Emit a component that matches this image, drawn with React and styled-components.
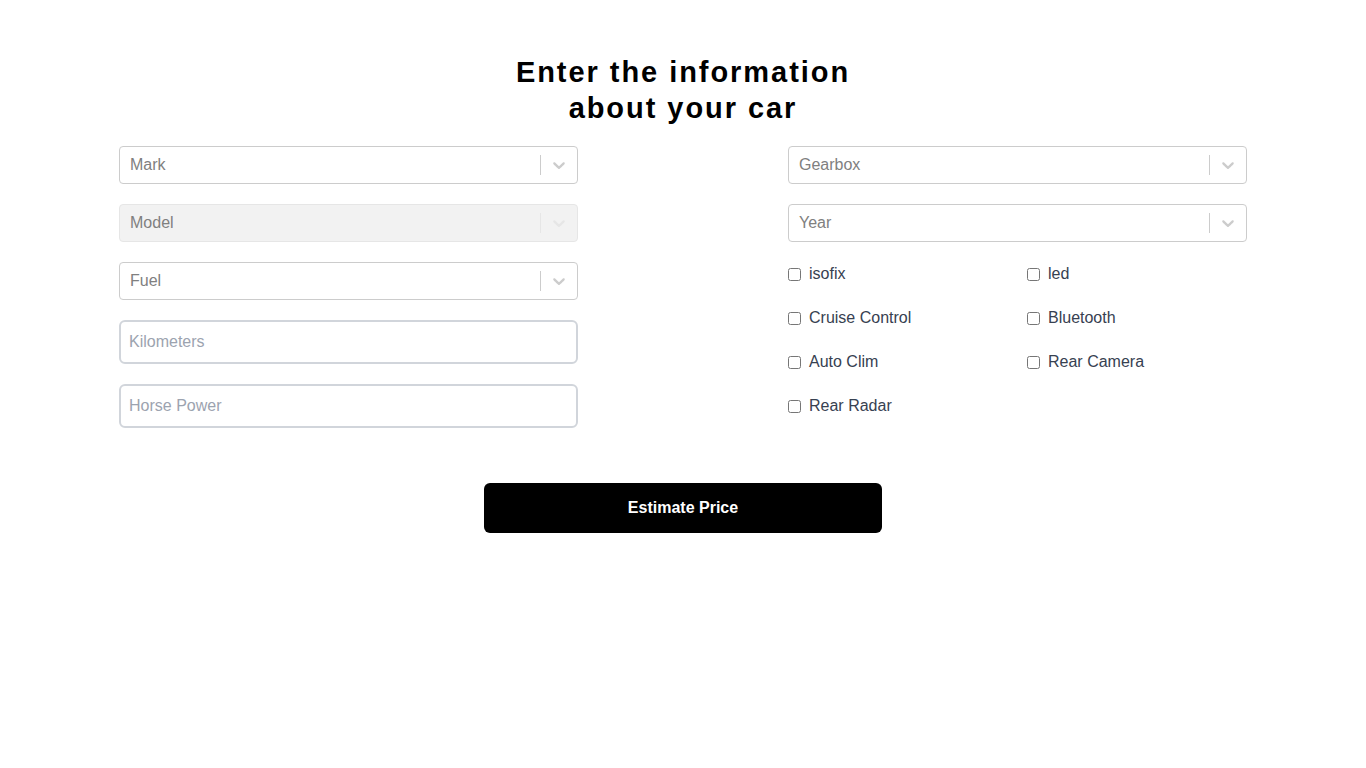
import React from "react";
import styled, { createGlobalStyle } from "styled-components";

const Global = createGlobalStyle`
  html, body { margin: 0; padding: 0; background: #fff; }
  body { font-family: "Liberation Sans", Arial, sans-serif; }
  * { box-sizing: border-box; }
`;

const Page = styled.div`
  width: 1128px;
  margin: 0 auto;
  padding-top: 54px;
  display: flex;
  flex-direction: column;
  align-items: center;
`;

const Title = styled.h1`
  margin: 0 0 20px;
  font-size: 29px;
  line-height: 36px;
  font-weight: 700;
  letter-spacing: 1.95px;
  text-align: center;
  color: #000;
`;

const Columns = styled.div`
  width: 100%;
  display: grid;
  grid-template-columns: 459px 459px;
  justify-content: space-between;
  align-items: start;
`;

const Column = styled.div`
  display: flex;
  flex-direction: column;
  gap: 20px;
`;

const SelectBox = styled.div`
  height: 38px;
  display: flex;
  align-items: center;
  border: 1px solid ${(p) => (p.$disabled ? "#e6e6e6" : "#cccccc")};
  background: ${(p) => (p.$disabled ? "#f2f2f2" : "#fff")};
  border-radius: 4px;
`;

const SelectValue = styled.div`
  flex: 1;
  padding: 2px 8px;
  margin-left: 2px;
  font-size: 16px;
  color: #808080;
`;

const Separator = styled.span`
  align-self: stretch;
  width: 1px;
  margin: 8px 0;
  background: ${(p) => (p.$disabled ? "#e6e6e6" : "#cccccc")};
`;

const Indicator = styled.div`
  padding: 8px;
  display: flex;
`;

const TextInput = styled.input`
  height: 44px;
  width: 100%;
  border: 2px solid #d1d5db;
  border-radius: 6px;
  padding: 0 8px;
  font-family: "Liberation Sans", Arial, sans-serif;
  font-size: 16px;
  color: #111;
  outline: none;
  &::placeholder { color: #9ca3af; }
`;

const Checks = styled.div`
  display: grid;
  grid-template-columns: 239px 1fr;
  row-gap: 20px;
`;

const CheckLabel = styled.label`
  display: flex;
  align-items: center;
  gap: 8px;
  height: 24px;
  font-size: 16px;
  color: #374151;
`;

const Check = styled.input`
  margin: 0;
  width: 13px;
  height: 13px;
`;

const Button = styled.button`
  margin-top: 55px;
  width: 398px;
  height: 50px;
  border: none;
  border-radius: 6px;
  background: #000;
  color: #fff;
  font-family: "Liberation Sans", Arial, sans-serif;
  font-size: 16px;
  font-weight: 700;
  cursor: pointer;
`;

const Chevron = ({ color }) => (
  <svg width="20" height="20" viewBox="0 0 20 20" fill={color}>
    <path d="M4.516 7.548c0.436-0.446 1.043-0.481 1.576 0l3.908 3.747 3.908-3.747c0.533-0.481 1.141-0.446 1.574 0 0.436 0.445 0.408 1.197 0 1.615-0.406 0.418-4.695 4.502-4.695 4.502-0.217 0.223-0.502 0.335-0.787 0.335s-0.57-0.112-0.789-0.335c0 0-4.287-4.084-4.695-4.502s-0.436-1.170 0-1.615z" />
  </svg>
);

const Select = ({ placeholder, disabled }) => (
  <SelectBox $disabled={disabled}>
    <SelectValue>{placeholder}</SelectValue>
    <Separator $disabled={disabled} />
    <Indicator>
      <Chevron color={disabled ? "#e6e6e6" : "#cccccc"} />
    </Indicator>
  </SelectBox>
);

const features = ["isofix", "led", "Cruise Control", "Bluetooth", "Auto Clim", "Rear Camera", "Rear Radar"];

export default function App() {
  return (
    <>
      <Global />
      <Page>
        <Title>
          Enter the information
          <br />
          about your car
        </Title>
        <Columns>
          <Column>
            <Select placeholder="Mark" />
            <Select placeholder="Model" disabled />
            <Select placeholder="Fuel" />
            <TextInput placeholder="Kilometers" />
            <TextInput placeholder="Horse Power" />
          </Column>
          <Column>
            <Select placeholder="Gearbox" />
            <Select placeholder="Year" />
            <Checks>
              {features.map((f) => (
                <CheckLabel key={f}>
                  <Check type="checkbox" />
                  {f}
                </CheckLabel>
              ))}
            </Checks>
          </Column>
        </Columns>
        <Button>Estimate Price</Button>
      </Page>
    </>
  );
}
